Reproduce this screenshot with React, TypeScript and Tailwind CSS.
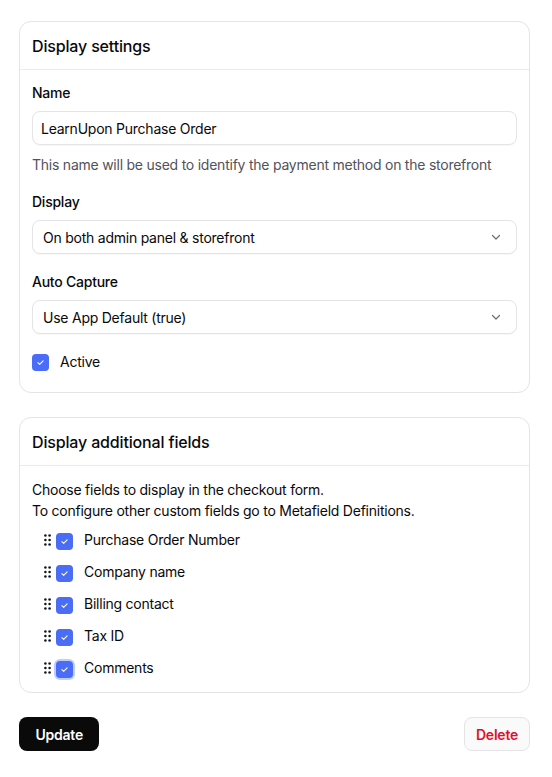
import * as React from "react";

const fields = ["Purchase Order Number", "Company name", "Billing contact", "Tax ID", "Comments"];

function Check({ focused }: { focused?: boolean }) {
  return (
    <span
      className={`inline-flex h-[17px] w-[17px] shrink-0 items-center justify-center rounded-[4px] bg-[#4a6cf7] ${
        focused ? "ring-2 ring-[#bfcdfc]" : ""
      }`}
    >
      <svg width="9" height="9" viewBox="0 0 12 12" fill="none">
        <path d="M2.5 6.2l2.4 2.3 4.6-4.8" stroke="white" strokeWidth="1.4" strokeLinecap="round" strokeLinejoin="round" />
      </svg>
    </span>
  );
}

function Grip() {
  return (
    <svg width="7" height="12" viewBox="0 0 7 12" className="shrink-0">
      {[1.5, 6, 10.5].map((y) => (
        <React.Fragment key={y}>
          <circle cx="1.4" cy={y} r="1.3" fill="#18181b" />
          <circle cx="5.6" cy={y} r="1.3" fill="#18181b" />
        </React.Fragment>
      ))}
    </svg>
  );
}

function Chevron() {
  return (
    <svg width="12" height="12" viewBox="0 0 12 12" fill="none">
      <path d="M2.5 4.5L6 8l3.5-3.5" stroke="#71717a" strokeWidth="1.3" strokeLinecap="round" strokeLinejoin="round" />
    </svg>
  );
}

function Select({ value }: { value: string }) {
  return (
    <div className="flex h-[34px] items-center justify-between rounded-lg border border-[#e4e4e7] bg-white pl-[10px] pr-[14px] text-[14px] tracking-[-0.017em] text-[#09090b] shadow-[0_1px_1px_rgba(0,0,0,0.03)]">
      <span>{value}</span>
      <Chevron />
    </div>
  );
}

export default function App() {
  return (
    <div
      className="min-h-screen bg-white pl-[19px] pr-[22px] pt-[21px] pb-6 text-[#09090b]"
      style={{ fontFamily: "Inter, 'Noto Sans', sans-serif" }}
    >
      {/* Display settings */}
      <div className="rounded-xl border border-[#e4e4e7]">
        <div className="flex h-[48px] items-center border-b border-[#ececee] px-3">
          <h2 className="text-[16px] font-medium leading-6 tracking-[-0.01em]">Display settings</h2>
        </div>
        <div className="px-3 pt-[13px] pb-5 text-[14px] tracking-[-0.017em]">
          <label className="block font-medium leading-5">Name</label>
          <div className="mt-2 flex h-[34px] items-center rounded-lg border border-[#e4e4e7] px-2 shadow-[0_1px_1px_rgba(0,0,0,0.03)]">
            LearnUpon Purchase Order
          </div>
          <p className="mt-[10px] leading-5 text-[#52525b]">
            This name will be used to identify the payment method on the storefront
          </p>

          <label className="mt-[17px] block font-medium leading-5">Display</label>
          <div className="mt-2">
            <Select value="On both admin panel & storefront" />
          </div>

          <label className="mt-[18px] block font-medium leading-5">Auto Capture</label>
          <div className="mt-2">
            <Select value="Use App Default (true)" />
          </div>

          <div className="mt-[18px] flex h-5 items-center gap-[11px]">
            <Check />
            <span className="leading-5">Active</span>
          </div>
        </div>
      </div>

      {/* Display additional fields */}
      <div className="mt-[24px] rounded-xl border border-[#e4e4e7]">
        <div className="flex h-[48px] items-center border-b border-[#ececee] px-3">
          <h2 className="text-[16px] font-medium leading-6 tracking-[-0.01em]">Display additional fields</h2>
        </div>
        <div className="px-3 pt-[13px] pb-[14px] text-[14px] tracking-[-0.017em]">
          <p className="leading-[21px]">Choose fields to display in the checkout form.</p>
          <p className="leading-[21px]">To configure other custom fields go to Metafield Definitions.</p>
          <div className="mt-[9px] flex flex-col gap-3 pl-[12px]">
            {fields.map((f, i) => (
              <div key={f} className="flex h-5 items-center">
                <Grip />
                <span className="ml-[5px]">
                  <Check focused={i === fields.length - 1} />
                </span>
                <span className="ml-[11px] leading-5">{f}</span>
              </div>
            ))}
          </div>
        </div>
      </div>

      <div className="mt-[24px] flex items-center justify-between">
        <button className="h-[34px] rounded-lg bg-[#0a0a0a] px-[16.5px] text-[14px] font-semibold tracking-[-0.017em] text-white">
          Update
        </button>
        <button className="h-[34px] rounded-lg border border-[#e4e4e7] bg-[#fafafa] px-[11px] text-[14px] font-semibold tracking-[-0.017em] text-[#e0102b]">
          Delete
        </button>
      </div>
    </div>
  );
}
